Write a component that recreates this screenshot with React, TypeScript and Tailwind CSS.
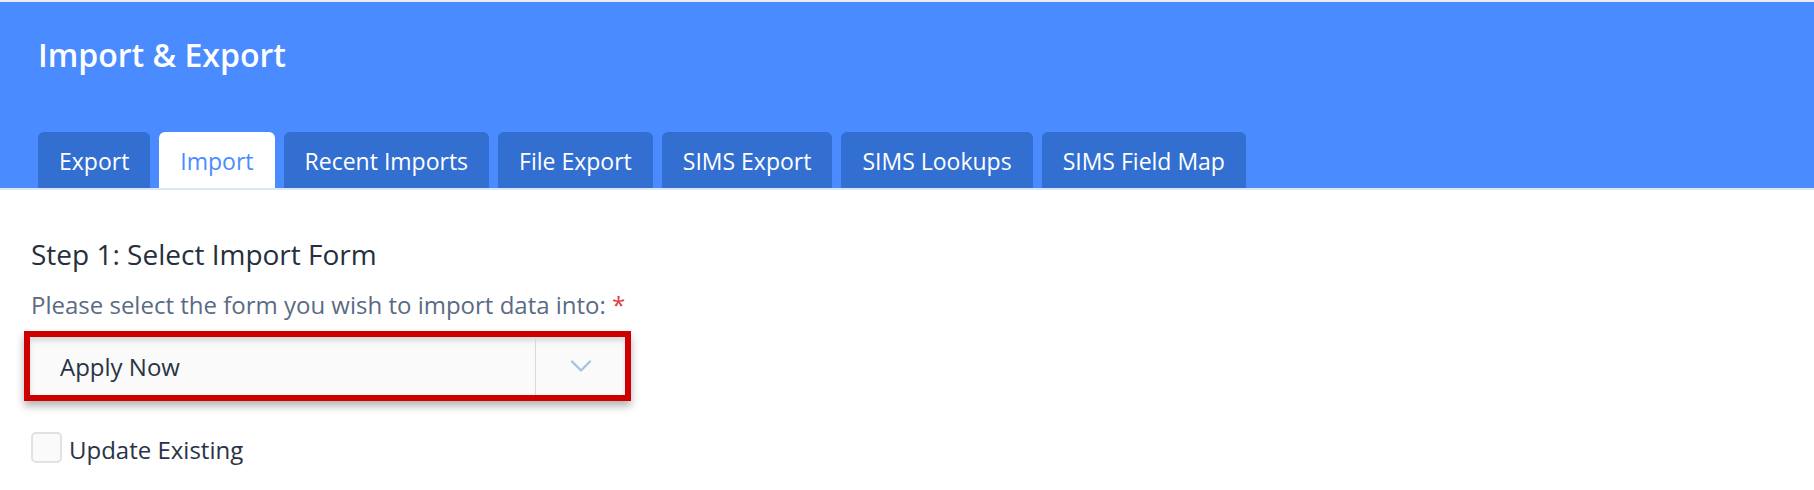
import { ChevronDown } from 'lucide-react';

const tabs = [
  'Export',
  'Import',
  'Recent Imports',
  'File Export',
  'SIMS Export',
  'SIMS Lookups',
  'SIMS Field Map',
];

export default function App() {
  const active = 'Import';

  return (
    <div
      className="w-[1814px] h-[490px] bg-white overflow-hidden"
      style={{ fontFamily: '"Open Sans", "Noto Sans", sans-serif' }}
    >
      <div className="h-[2px] bg-[#e9edf2]" />

      {/* Header */}
      <div className="bg-[#4a8cff] pt-[33px] pl-[38px]">
        <h1 className="text-[32px] leading-[40px] font-semibold text-white">Import &amp; Export</h1>
        <div className="flex gap-[9px] mt-[57px]">
          {tabs.map((tab) => (
            <div
              key={tab}
              className={`h-[56px] px-[21px] rounded-t-[6px] text-[23px] leading-[58px] ${
                tab === active ? 'bg-white text-[#4a8cff]' : 'bg-[#336fd0] text-white'
              }`}
            >
              {tab}
            </div>
          ))}
        </div>
      </div>
      <div className="h-[2px] bg-[#dce7f6]" />

      {/* Form */}
      <div className="pl-[31px] pt-[46px]">
        <h2 className="text-[28px] leading-[36px] text-[#262f3e]">Step 1: Select Import Form</h2>
        <div className="mt-[18px] text-[24px] leading-[30px] text-[#5b6b84]">
          Please select the form you wish to import data into: <span className="text-[#e0383e]">*</span>
        </div>

        <div className="mt-[11px] -ml-[7px] w-[607px] h-[70px] border-[6px] border-[#cc0000] shadow-[0_5px_8px_rgba(0,0,0,0.3)]">
          <div className="flex h-full bg-[#fafafa] shadow-[inset_0_4px_5px_rgba(0,0,0,0.13)]">
            <div className="flex-1 flex items-center pl-[30px] pt-[2px] text-[24px] text-[#2a3345]">Apply Now</div>
            <div className="w-[90px] border-l border-[#d9d9d9] flex items-center justify-center">
              <ChevronDown size={36} strokeWidth={1.6} className="text-[#a9c1e3]" />
            </div>
          </div>
        </div>

        <label className="mt-[31px] flex items-start gap-[7px]">
          <span className="w-[31px] h-[31px] rounded-[5px] border-2 border-[#e2e2e2] bg-[#fafafa]" />
          <span className="text-[24px] leading-[31px] mt-[2px] text-[#2a3345]">Update Existing</span>
        </label>
      </div>
    </div>
  );
}
